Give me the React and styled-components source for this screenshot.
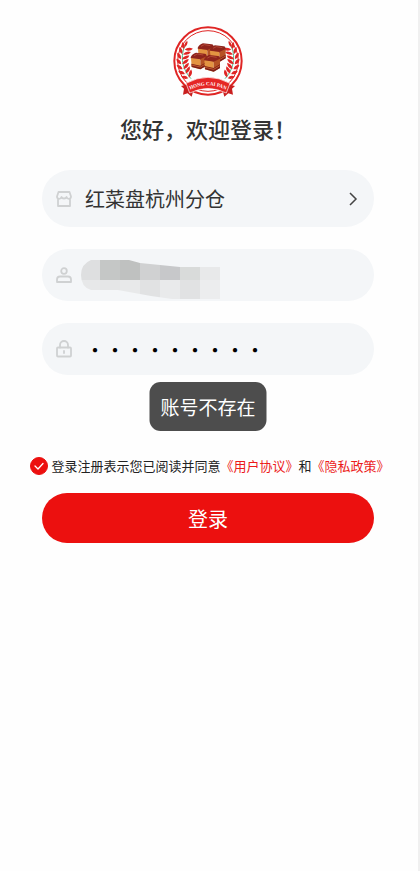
import React, { useState } from "react";
import styled, { createGlobalStyle } from "styled-components";

const GlobalStyle = createGlobalStyle`
  * { box-sizing: border-box; }
  body {
    margin: 0;
    background: #fefefe;
    font-family: "Noto Sans CJK SC", "Noto Sans", sans-serif;
    color: #333;
  }
  button, input { font: inherit; color: inherit; }
`;

const Page = styled.main`
  min-height: 100vh;
  border-right: 2px solid #f0f0f0;
  padding: 26px 0 40px;
`;

const Header = styled.header`
  display: flex;
  flex-direction: column;
  align-items: center;
  gap: 14px;
  padding-right: 2px;
`;

const Title = styled.h1`
  margin: 0;
  font-size: 22px;
  line-height: 34px;
  font-weight: 500;
`;

const Form = styled.form`
  display: flex;
  flex-direction: column;
  padding: 25px 44px 0 42px;
`;

const Fields = styled.div`
  position: relative;
  display: flex;
  flex-direction: column;
  gap: 22px;
`;

const fieldLook = `
  display: flex;
  align-items: center;
  gap: 13px;
  width: 100%;
  padding: 0 14px;
  border: 0;
  border-radius: 29px;
  background: #f4f6f8;
`;

const StorePicker = styled.button`
  ${fieldLook}
  height: 57px;
  font-size: 20px;
  text-align: left;
  cursor: pointer;
`;

const StoreName = styled.span`
  flex: 1;
`;

const Field = styled.label`
  ${fieldLook}
  position: relative;
  height: 52px;
`;

const TextInput = styled.input`
  flex: 1;
  min-width: 0;
  height: 40px;
  padding: 0;
  border: 0;
  outline: 0;
  background: transparent;
  color: #000;
  font-size: 20px;
`;

const FieldIcon = styled.svg`
  flex: none;
  width: 16px;
  height: 18px;
  fill: none;
  stroke: #cfd1d2;
  stroke-width: 1.8;
  stroke-linejoin: round;
  stroke-linecap: round;
`;

const Chevron = styled.svg`
  flex: none;
  width: 12px;
  height: 16px;
  fill: none;
  stroke: #444;
  stroke-width: 1.5;
`;

const Mosaic = styled.svg`
  position: absolute;
  left: 39px;
  top: 11px;
  width: 140px;
  height: 40px;
  pointer-events: none;
`;

const Toast = styled.div`
  position: absolute;
  top: 100%;
  left: 50%;
  transform: translateX(-50%);
  margin-top: 7px;
  padding: 10px 11px;
  border-radius: 11px;
  background: #4d4d4d;
  color: #fff;
  font-size: 19px;
  line-height: 29px;
  white-space: nowrap;
`;

const Agreement = styled.div`
  display: flex;
  align-items: center;
  justify-content: center;
  gap: 3px;
  margin: 79px -24px 0 -20px;
  color: #222;
  font-size: 13px;
  line-height: 24px;
  white-space: nowrap;
`;

const CheckWrap = styled.span`
  display: grid;
  flex: none;
  width: 18px;
  height: 18px;
  & > * { grid-area: 1 / 1; }
`;

const CheckBox = styled.input`
  appearance: none;
  width: 18px;
  height: 18px;
  margin: 0;
  border: 1px solid #ec100f;
  border-radius: 50%;
  cursor: pointer;
  &:checked { background: #ec100f; }
`;

const CheckMark = styled.svg`
  width: 18px;
  height: 18px;
  fill: none;
  stroke: #fff;
  stroke-width: 1.3;
  stroke-linecap: round;
  stroke-linejoin: round;
  pointer-events: none;
`;

const PolicyLink = styled.a`
  color: #ec1b1b;
  text-decoration: none;
`;

const LoginButton = styled.button`
  height: 50px;
  margin-top: 15px;
  border: 0;
  border-radius: 25px;
  background: #ec100f;
  color: #fff;
  font-size: 20px;
  cursor: pointer;
`;

const LEAVES = [
  [30, 66, 38], [24, 80, 28], [20, 95, 18], [20, 110, 6],
  [23, 125, -6], [29, 139, -18], [38, 152, -30],
];

function Laurel() {
  return (
    <g>
      <path d="M42 50C20 80 24 126 54 158" fill="none" stroke="#4bb985" strokeWidth="3" />
      <g fill="#df2524">
        <path d="M43 44q-10 6-8 19q10-6 8-19z" />
        {LEAVES.map(([x, y, a]) => (
          <g key={y} transform={`translate(${x + 6} ${y}) rotate(${a})`}>
            <path d="M-1 5Q-15 4-17-10Q-2-9-1 5z" />
            <path d="M2 4Q5-10 20-13Q19 2 2 4z" />
          </g>
        ))}
      </g>
    </g>
  );
}

function MeatBlock({ x, y }) {
  return (
    <g transform={`translate(${x} ${y})`}>
      <path d="M0 14Q4 3 16 0L42 3Q49 4 48 14L30 22L1 18z" fill="#8e241c" />
      <path d="M1 16L29 20L29 50L3 43z" fill="#e39442" />
      <path d="M29 20L48 11L48 39L29 50z" fill="#b65325" />
      <path d="M2 33L29 39L48 28V39L29 50L3 43z" fill="#7d1e19" />
      <path d="M3 37L29 43L48 32" fill="none" stroke="#e27a37" strokeWidth="2" />
      <path d="M10 9L20 4L38 7" fill="none" stroke="#c45a44" strokeWidth="2" />
    </g>
  );
}

function Logo() {
  return (
    <svg width="70" height="71" viewBox="0 0 210 213" role="img" aria-label="Hong Cai Pan">
      <circle cx="105" cy="105" r="101" fill="#fff" stroke="#df2524" strokeWidth="6" />
      <circle cx="105" cy="105" r="91" fill="#fdfefe" stroke="#df2524" strokeWidth="3" />
      <Laurel />
      <g transform="translate(210 0) scale(-1 1)"><Laurel /></g>
      <MeatBlock x={74} y={52} />
      <MeatBlock x={110} y={58} />
      <MeatBlock x={53} y={80} />
      <MeatBlock x={93} y={87} />
      <path d="M50 174L24 180L33 188L30 206L44 202L56 212L62 190z" fill="#c91f1f" />
      <path d="M160 174L186 180L177 188L180 206L166 202L154 212L148 190z" fill="#c91f1f" />
      <path d="M39 172Q105 136 171 172L160 201Q105 174 50 201z" fill="#e52625" stroke="#fff" strokeWidth="2" />
      <path id="ribbon-line" d="M42 196Q105 160 168 196" fill="none" />
      <text fill="#fff" fontFamily="Liberation Serif, serif" fontWeight="700" fontSize="15" textAnchor="middle">
        <textPath href="#ribbon-line" startOffset="50%">HONG CAI PAN</textPath>
      </text>
    </svg>
  );
}

function StoreIcon() {
  return (
    <FieldIcon viewBox="0 0 16 18" aria-hidden="true">
      <path d="M2.500 2h11L15 6.500c0 3-3.600 3-4.500 .5C10 9 6 9 5.500 7C4.600 9.500 1 9.500 1 6.500zM2 9V16h12V9" />
    </FieldIcon>
  );
}

function UserIcon() {
  return (
    <FieldIcon viewBox="0 0 16 18" aria-hidden="true">
      <circle cx="8" cy="5" r="2.800" />
      <path d="M1 16v-2.500Q1 10.500 4 10.500h8q3 0 3 3V16z" />
    </FieldIcon>
  );
}

function LockIcon() {
  return (
    <FieldIcon viewBox="0 0 16 18" aria-hidden="true">
      <rect x="1" y="7.500" width="14" height="9" rx="1" />
      <path d="M4 7.500V5a4 4 0 0 1 8 0v2.500M8 11v2" />
    </FieldIcon>
  );
}

const TOP_TONES = ["#dedfe0", "#c5c7c6", "#bfc1c0", "#d0d1d2", "#c7c8ca", "#d9dbda", "#e8e9ea"];
const BOTTOM_TONES = ["#e7e8e9", "#e5e6e7", "#e8e9ea", "#e1e2e3", "#e9eaeb", "#e1e2e3", "#ecedee"];

function MaskedAccount() {
  return (
    <Mosaic viewBox="0 0 140 40" aria-hidden="true">
      <clipPath id="account-mask">
        <path d="M10 0H48L59 3L99 7H139V39H91L70 36L37 30H10Q0 27 0 15Q0 4 10 0z" />
      </clipPath>
      <g clipPath="url(#account-mask)">
        {TOP_TONES.map((tone, i) => (
          <rect key={i} x={i * 20 - 1} y="0" width="20" height="20" fill={tone} />
        ))}
        {BOTTOM_TONES.map((tone, i) => (
          <rect key={i} x={i * 20 - 1} y="20" width="20" height="20" fill={tone} />
        ))}
      </g>
    </Mosaic>
  );
}

export default function App() {
  const [agreed, setAgreed] = useState(true);
  return (
    <>
      <GlobalStyle />
      <Page>
        <Header>
          <Logo />
          <Title>您好，欢迎登录！</Title>
        </Header>
        <Form onSubmit={(e) => e.preventDefault()}>
          <Fields>
            <StorePicker type="button">
              <StoreIcon />
              <StoreName>红菜盘杭州分仓</StoreName>
              <Chevron viewBox="0 0 12 16" aria-hidden="true">
                <path d="M2 2L8 8L2 14" />
              </Chevron>
            </StorePicker>
            <Field>
              <UserIcon />
              <TextInput type="text" aria-label="账号" autoComplete="off" />
              <MaskedAccount />
            </Field>
            <Field>
              <LockIcon />
              <TextInput type="password" aria-label="密码" defaultValue="123456789" autoComplete="off" />
            </Field>
            <Toast role="alert">账号不存在</Toast>
          </Fields>
          <Agreement>
            <CheckWrap>
              <CheckBox
                id="agree"
                type="checkbox"
                checked={agreed}
                onChange={(e) => setAgreed(e.target.checked)}
              />
              <CheckMark viewBox="0 0 18 18" aria-hidden="true">
                <path d="M5 9L8 12L13 6.500" />
              </CheckMark>
            </CheckWrap>
            <span>
              <label htmlFor="agree">登录注册表示您已阅读并同意</label>
              <PolicyLink href="#terms">《用户协议》</PolicyLink>和<PolicyLink href="#privacy">《隐私政策》</PolicyLink>
            </span>
          </Agreement>
          <LoginButton type="submit">登录</LoginButton>
        </Form>
      </Page>
    </>
  );
}
